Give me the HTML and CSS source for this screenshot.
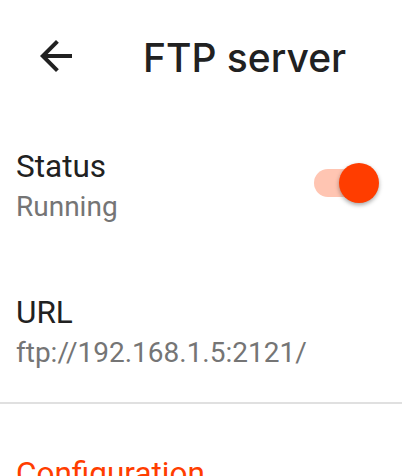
FILE: index.html
```html
<!DOCTYPE html>
<html>
<head>
    <title>FTP server</title>
    <meta charset="utf-8">
    <meta name="viewport" content="width=device-width">
    <link rel="stylesheet" href="styles.css">
</head>
<body>
<div class="toolbar">
    <a href="#" class="back">
        <svg width="48" height="48" viewBox="0 0 24 24"><path d="M20 11H7.83l5.59-5.59L12 4l-8 8 8 8 1.41-1.41L7.83 13H20v-2z" fill="#212121"/></svg>
    </a>
    <div class="toolbar-title">FTP server</div>
</div>

<div class="prefs">
    <div class="pref">
        <div class="pref-text">
            <div class="pref-title">Status</div>
            <div class="pref-summary">Running</div>
        </div>
        <div class="switch">
            <div class="switch-track"></div>
            <div class="switch-thumb"></div>
        </div>
    </div>
    <div class="pref">
        <div class="pref-text">
            <div class="pref-title">URL</div>
            <div class="pref-summary">ftp://192.168.1.5:2121/</div>
        </div>
    </div>
</div>

<div class="divider"></div>

<div class="category">Configuration</div>
</body>
</html>
```

FILE: styles.css
```css
* {
	padding: 0;
	margin: 0;
	box-sizing: border-box;
}

body {
	width: 402px;
	overflow: hidden;
	background: #fff;
	font-family: Roboto, "Liberation Sans", sans-serif;
	color: #212121;
}

.toolbar {
	height: 114px;
	display: flex;
	align-items: center;
	padding-left: 32px;
}

.back {
	display: flex;
	width: 48px;
	height: 48px;
	margin-top: -2px;
}

.toolbar-title {
	margin-left: 63px;
	font-family: Inter, Roboto, sans-serif;
	font-size: 39px;
	font-weight: 500;
	color: #212121;
}

.prefs {
	display: flex;
	flex-direction: column;
	gap: 4px;
}

.pref {
	display: flex;
	align-items: center;
	padding: 33px 23px 29px 16px;
}

.pref-text {
	flex: 1;
}

.pref-title {
	font-size: 31.5px;
	line-height: 40px;
	color: #212121;
}

.pref-summary {
	font-size: 28px;
	line-height: 40px;
	color: #757575;
}

.switch {
	position: relative;
	width: 65px;
	height: 40px;
	margin-bottom: 8px;
}

.switch-track {
	position: absolute;
	left: 0;
	top: 6px;
	width: 56px;
	height: 28px;
	border-radius: 14px;
	background: #ffc5b2;
}

.switch-thumb {
	position: absolute;
	right: 0;
	top: 0;
	width: 40px;
	height: 40px;
	border-radius: 50%;
	background: #ff3d00;
	box-shadow: 0 2px 4px rgba(0, 0, 0, 0.35);
}

.divider {
	height: 2px;
	background: #e0e0e0;
}

.category {
	margin-top: 50px;
	padding-left: 16px;
	font-size: 31.5px;
	line-height: 40px;
	color: #ff3d00;
}
```
